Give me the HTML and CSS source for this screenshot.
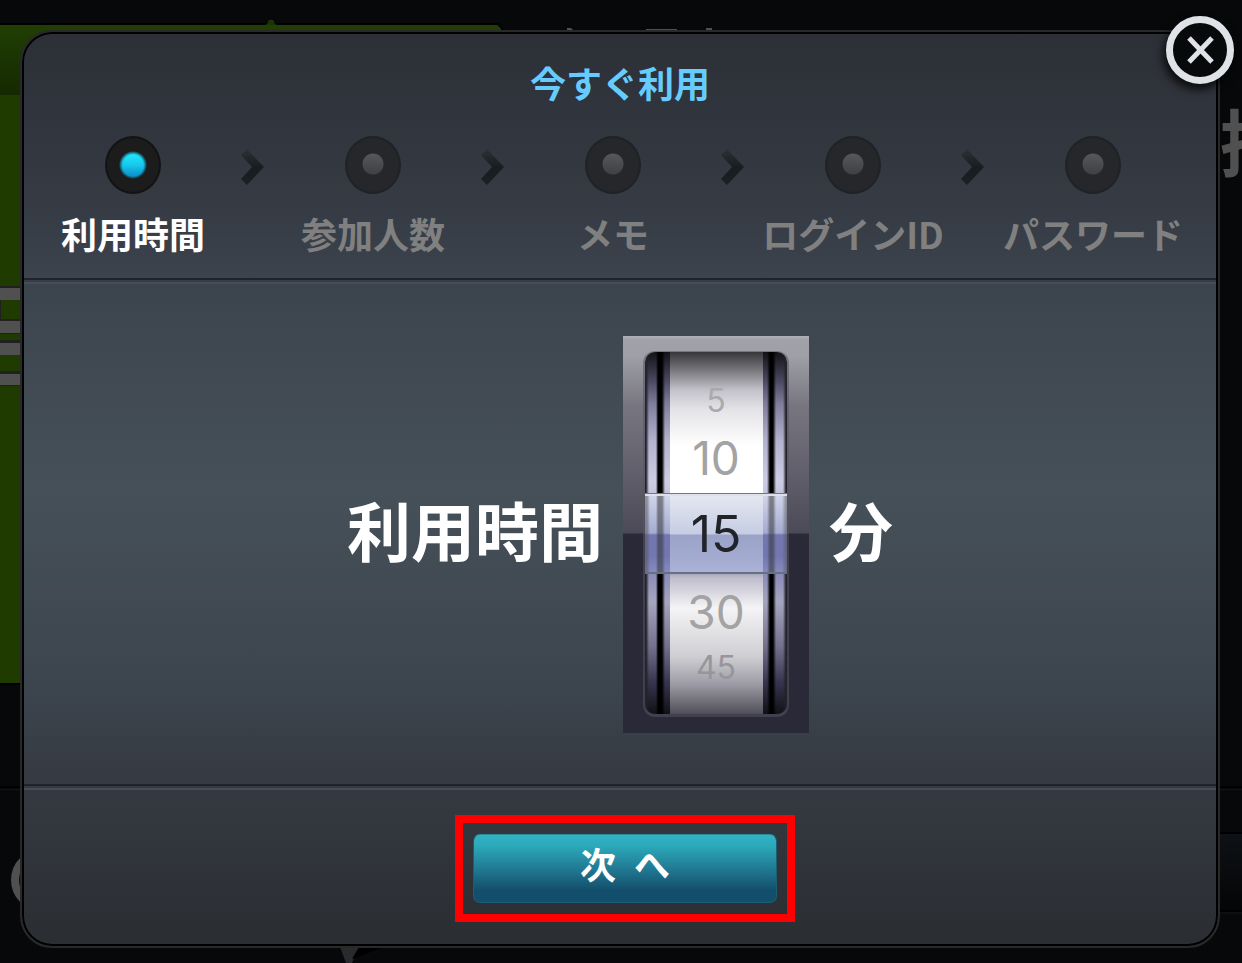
FILE: index.html
```html
<!DOCTYPE html>
<html lang="ja">
<head>
<meta charset="utf-8">
<meta name="viewport" content="width=device-width, initial-scale=1">
<title>今すぐ利用</title>
<link rel="stylesheet" href="styles.css">
</head>
<body>
<svg class="backdrop" width="1242" height="963" aria-hidden="true">
  <defs>
    <linearGradient id="cardTop" x1="0" y1="0" x2="0" y2="1"><stop offset="0" stop-color="#213f04"/><stop offset="1" stop-color="#152900"/></linearGradient>
    <linearGradient id="bar" x1="0" y1="0" x2="0" y2="1"><stop offset="0" stop-color="#0e1115"/><stop offset="1" stop-color="#040506"/></linearGradient>
  </defs>
  <path d="M0 23h498l5 5v657H0z" fill="#000"/>
  <path d="M0 25h497l4 4v654H0z" fill="#1f3b00"/>
  <path d="M0 25h497l4 4v66H0z" fill="url(#cardTop)"/>
  <path d="M264 25q4 0 4-4q3-3 6 0q0 4 4 4z" fill="#1b3502"/>
  <g fill="#202020"><rect y="286" width="22" height="14"/><rect y="319" width="22" height="15"/><rect y="340" width="22" height="15"/><rect y="371" width="22" height="15"/></g>
  <g fill="#505050"><rect y="288" width="22" height="12"/><rect y="321" width="22" height="12"/><rect y="343" width="22" height="12"/><rect y="374" width="22" height="11"/></g>
  <path d="M0 300h1v20h-1z" fill="#202020"/>
  <g fill="#505050"><path d="M567 28h4l2 2h-6z"/><path d="M646 29h31v1h-31z"/><path d="M706 28h6v2h-6z"/></g>
  <path d="M0 787h1242" stroke="#000" stroke-width="2"/><path d="M0 789.500h1242" stroke="#111315"/>
  <rect x="1216" y="834" width="26" height="78" fill="url(#bar)"/>
  <path d="M1216 833h26M1216 911h26" stroke="#000" stroke-width="2"/><path d="M1216 913h26" stroke="#151719"/>
  <circle cx="42" cy="880" r="27" fill="none" stroke="#505050" stroke-width="8"/>
  <path d="M340 947h19l-7 16h-6z" fill="#292a2e"/><path d="M359 947h25l-32 12z" fill="#000"/>
  <text class="backdrop-text" x="1220" y="170">招</text>
</svg>

<main class="dialog" role="dialog" aria-labelledby="title">
  <button class="close" type="button" aria-label="閉じる">
    <svg viewBox="0 0 54 54" aria-hidden="true"><path d="M16 15l23 24M39 15L16 39"/></svg>
  </button>
  <header class="head">
    <h1 class="title" id="title">今すぐ利用</h1>
    <ol class="steps">
      <li class="step current" aria-current="step"><span class="dot"></span>利用時間</li>
      <li class="arrow" aria-hidden="true"><svg viewBox="0 0 24 36"><path d="M6 0L23 18L6 36L0 30L11 18L0 6z" fill="url(#chev)"/><defs><linearGradient id="chev" x1="0" y1="0" x2="0" y2="1"><stop offset="0" stop-color="#2d3237"/><stop offset=".5" stop-color="#191c20"/><stop offset="1" stop-color="#1b2024"/></linearGradient></defs></svg></li>
      <li class="step"><span class="dot"></span>参加人数</li>
      <li class="arrow" aria-hidden="true"><svg viewBox="0 0 24 36"><path d="M6 0L23 18L6 36L0 30L11 18L0 6z" fill="url(#chev)"/></svg></li>
      <li class="step"><span class="dot"></span>メモ</li>
      <li class="arrow" aria-hidden="true"><svg viewBox="0 0 24 36"><path d="M6 0L23 18L6 36L0 30L11 18L0 6z" fill="url(#chev)"/></svg></li>
      <li class="step"><span class="dot"></span>ログインID</li>
      <li class="arrow" aria-hidden="true"><svg viewBox="0 0 24 36"><path d="M6 0L23 18L6 36L0 30L11 18L0 6z" fill="url(#chev)"/></svg></li>
      <li class="step"><span class="dot"></span>パスワード</li>
    </ol>
  </header>
  <section class="content">
    <span class="caption" id="duration">利用時間</span>
    <div class="picker" role="radiogroup" aria-labelledby="duration">
      <div class="wheel">
        <label class="option far"><input type="radio" name="minutes" value="5">5</label>
        <label class="option near"><input type="radio" name="minutes" value="10">10</label>
        <label class="option chosen"><input type="radio" name="minutes" value="15" checked>15</label>
        <label class="option near"><input type="radio" name="minutes" value="30">30</label>
        <label class="option far"><input type="radio" name="minutes" value="45">45</label>
      </div>
    </div>
    <span class="caption">分</span>
  </section>
  <footer class="foot">
    <div class="highlight"><button class="next" type="button">次&ensp;へ</button></div>
  </footer>
</main>
</body>
</html>
```
FILE: styles.css
```css
* { box-sizing: border-box; }

body {
  display: flex;
  min-height: 100vh;
  margin: 0;
  padding: 30px 22px 15px 20px;
  background: #06080a;
  font-family: "Noto Sans CJK JP", sans-serif;
  font-weight: 700;
}

.backdrop { position: absolute; top: 0; left: 0; max-width: 100%; }
.backdrop-text { font-size: 72px; fill: #505050; }

.dialog {
  position: relative;
  display: flex;
  flex: 1;
  flex-direction: column;
  border: 2px solid #292929;
  border-radius: 32px;
  box-shadow: inset 0 0 0 2px #000;
  padding: 2px;
  background: linear-gradient(#2c2f36, #353a43 18%, #3d464f 30%, #465059 50%, #3d464f 70%, #343840 84%, #2a2e32);
}

.close {
  position: absolute;
  top: -16px;
  right: -16px;
  width: 68px;
  height: 68px;
  padding: 0;
  border: 7px solid #dfe3e7;
  border-radius: 50%;
  background: #07090b;
  box-shadow: -2px 5px 8px 1px #000b;
}
.close svg { display: block; width: 100%; height: 100%; }
.close path { fill: none; stroke: #dfe3e7; stroke-width: 5; }

.head {
  height: 250px;
  padding-top: 22px;
  border-bottom: 2px solid #454e58;
  box-shadow: inset 0 -2px #353d46, inset 0 -4px #20232b;
}
.title { margin: 0; color: #66ccff; font-size: 36px; font-weight: 700; line-height: 52px; text-align: center; }

.steps {
  display: grid;
  grid-template-columns: repeat(4, minmax(0, 3fr) minmax(0, 1fr)) minmax(0, 3fr);
  margin: 0;
  padding: 28px 33px 0 19px;
  list-style: none;
}
.step {
  display: flex;
  flex-direction: column;
  align-items: center;
  gap: 13px;
  color: #808080;
  font-size: 36px;
  line-height: 52px;
  white-space: nowrap;
}
.step.current { color: #fff; }
.dot {
  width: 56px;
  height: 58px;
  border: 2px solid #1f2326;
  border-radius: 50%;
  background: radial-gradient(circle at 26px 26px, #0000 10px, #25272a 11px), linear-gradient(#58585b 15px, #3b3c3f 40px);
}
.current .dot {
  border-color: #121314;
  background: radial-gradient(circle at 26px 27px, #0000 10px, #0aa0c780 11px, #1c1c1d 14px), linear-gradient(#22e7fa 16px, #17c8ec 27px, #0a91cb 38px);
}
.arrow { padding-top: 13px; text-align: center; line-height: 36px; }
.arrow svg { width: 24px; height: 36px; vertical-align: top; }

.content { display: flex; flex: 1; align-items: center; justify-content: center; gap: 20px; }
.caption { padding-bottom: 12px; color: #fff; font-size: 64px; line-height: 80px; }

.picker {
  padding: 16px 22px 19px;
  background: linear-gradient(#b0b0b4, #a1a1a8 4px, #9f9fa7 20px, #777680 70px, #4d4a58 197px, #292938 198px);
}
.wheel {
  position: relative;
  display: grid;
  grid-template-rows: 72px 70px 80px 76px 64px;
  width: 142px;
  border-radius: 10px;
  box-shadow: 0 1px 0 2px #55556288;
  overflow: hidden;
  background:
    linear-gradient(#37373a, #77777c 18px, #c3c2ca 38px, #e4e4e8 58px, #fff 94px, #fff 141px, #a9a8c0 222px, #bfbdcb 226px, #f4f4f6 256px, #cfcfd3 304px, #9d9ca6 332px, #504f58) center / 93px 100% no-repeat,
    linear-gradient(90deg, #222228 1px, #0000 4px 11px, #000 13px 17px, #0000 20px 122px, #000 125px 128px, #0000 131px 138px, #222228 141px),
    linear-gradient(#121216, #49475f 28px, #7f7d9b 52px, #b5b4d0 90px, #cccce4 130px, #8a8bb8 222px, #a6a5bf 250px, #73718d 294px, #37354e 330px, #111116);
}
.option {
  position: relative;
  display: grid;
  place-items: center;
  font-family: Inter, "Liberation Sans", sans-serif;
  font-weight: 400;
  line-height: 1;
}
.option input { position: absolute; opacity: 0; }
.near { color: #a3a3a3; font-size: 46px; }
.near:nth-child(2) { border-bottom: 1px solid #77777b; }
.far { color: #aaaaae; font-size: 32px; }
.far:first-child { padding-top: 26px; }
.far:last-child { padding-bottom: 28px; color: #96969c; }
.chosen {
  border-top: 2px solid #dce0e8;
  border-bottom: 2px solid #667080;
  background:
    linear-gradient(#e3e7f0, #c6cde3 38px, #9aa2c7 39px, #abb1d7) center / 93px 100% no-repeat,
    linear-gradient(90deg, #5558 2px, #0000 5px 11px, #3338 13px 17px, #0000 20px 122px, #3338 125px 128px, #0000 131px 137px, #5558 141px),
    linear-gradient(#d0d5ea, #a4abd0 37px, #7377b1 39px, #7377b1 60px, #858abd);
  color: #202327;
  font-size: 50px;
}

.foot {
  display: flex;
  justify-content: center;
  height: 160px;
  padding: 31px 0 0 10px;
  background: linear-gradient(#20232b 2px, #343a43 2px 4px, #454e58 4px 6px, #0000 6px);
}
.highlight { display: flex; align-self: flex-start; border: 8px solid #f00; padding: 11px 10px; }
.next {
  width: 304px;
  height: 69px;
  border: 1px solid #1c5f72;
  border-top-color: #278d99;
  border-radius: 7px;
  padding: 0 0 12px;
  background: linear-gradient(#32b2c3, #2caabb 15%, #1c6a86 62%, #134f6c 82%);
  color: #fff;
  font: 700 36px "Noto Sans CJK JP", sans-serif;
}
```
